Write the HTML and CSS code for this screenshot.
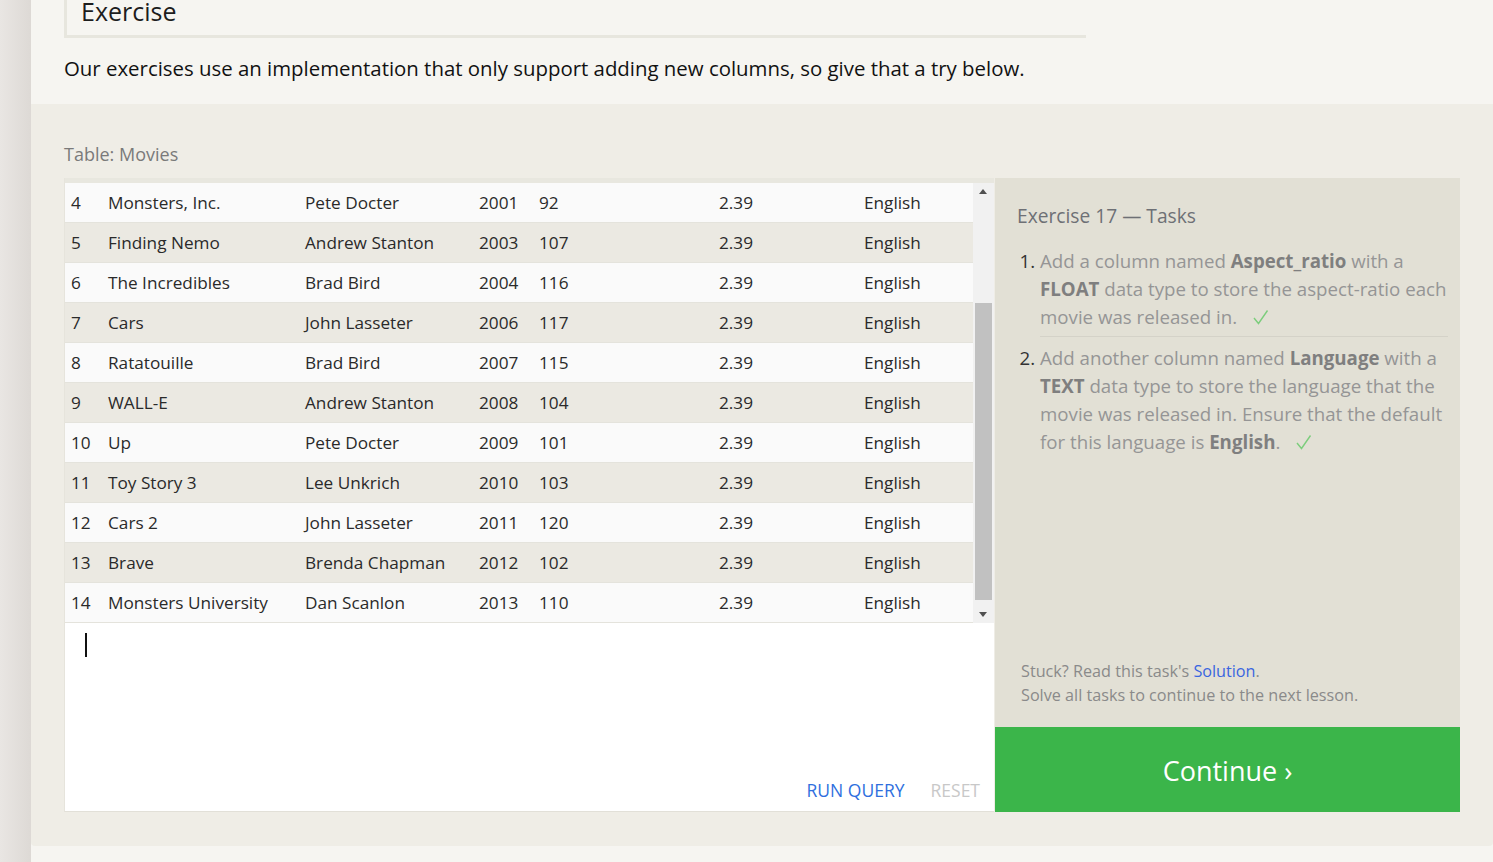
FILE: index.html
```html
<!DOCTYPE html>
<html>
<head>
<meta charset="utf-8">
<link rel="stylesheet" href="styles.css">
</head>
<body>
<div class="strip"></div>
<div class="page">
  <div class="intro">
    <div class="heading">Exercise</div>
    <p class="lead">Our exercises use an implementation that only support adding new columns, so give that a try below.</p>
  </div>
  <div class="exercise">
    <div class="table-label">Table: Movies</div>
    <div class="workspace">
      <div class="left">
        <div class="results">
          <div class="rows">
            <div class="row"><span class="c-id">4</span><span class="c-title">Monsters, Inc.</span><span class="c-dir">Pete Docter</span><span class="c-year">2001</span><span class="c-len">92</span><span class="c-ar">2.39</span><span class="c-lang">English</span></div>
            <div class="row alt"><span class="c-id">5</span><span class="c-title">Finding Nemo</span><span class="c-dir">Andrew Stanton</span><span class="c-year">2003</span><span class="c-len">107</span><span class="c-ar">2.39</span><span class="c-lang">English</span></div>
            <div class="row"><span class="c-id">6</span><span class="c-title">The Incredibles</span><span class="c-dir">Brad Bird</span><span class="c-year">2004</span><span class="c-len">116</span><span class="c-ar">2.39</span><span class="c-lang">English</span></div>
            <div class="row alt"><span class="c-id">7</span><span class="c-title">Cars</span><span class="c-dir">John Lasseter</span><span class="c-year">2006</span><span class="c-len">117</span><span class="c-ar">2.39</span><span class="c-lang">English</span></div>
            <div class="row"><span class="c-id">8</span><span class="c-title">Ratatouille</span><span class="c-dir">Brad Bird</span><span class="c-year">2007</span><span class="c-len">115</span><span class="c-ar">2.39</span><span class="c-lang">English</span></div>
            <div class="row alt"><span class="c-id">9</span><span class="c-title">WALL-E</span><span class="c-dir">Andrew Stanton</span><span class="c-year">2008</span><span class="c-len">104</span><span class="c-ar">2.39</span><span class="c-lang">English</span></div>
            <div class="row"><span class="c-id">10</span><span class="c-title">Up</span><span class="c-dir">Pete Docter</span><span class="c-year">2009</span><span class="c-len">101</span><span class="c-ar">2.39</span><span class="c-lang">English</span></div>
            <div class="row alt"><span class="c-id">11</span><span class="c-title">Toy Story 3</span><span class="c-dir">Lee Unkrich</span><span class="c-year">2010</span><span class="c-len">103</span><span class="c-ar">2.39</span><span class="c-lang">English</span></div>
            <div class="row"><span class="c-id">12</span><span class="c-title">Cars 2</span><span class="c-dir">John Lasseter</span><span class="c-year">2011</span><span class="c-len">120</span><span class="c-ar">2.39</span><span class="c-lang">English</span></div>
            <div class="row alt"><span class="c-id">13</span><span class="c-title">Brave</span><span class="c-dir">Brenda Chapman</span><span class="c-year">2012</span><span class="c-len">102</span><span class="c-ar">2.39</span><span class="c-lang">English</span></div>
            <div class="row"><span class="c-id">14</span><span class="c-title">Monsters University</span><span class="c-dir">Dan Scanlon</span><span class="c-year">2013</span><span class="c-len">110</span><span class="c-ar">2.39</span><span class="c-lang">English</span></div>
          </div>
          <div class="scrollbar">
            <div class="arrow up"></div>
            <div class="track"><div class="thumb"></div></div>
            <div class="arrow down"></div>
          </div>
        </div>
        <div class="editor">
          <div class="caret"></div>
          <div class="actions">
            <span class="run">RUN QUERY</span>
            <span class="reset">RESET</span>
          </div>
        </div>
      </div>
      <div class="right">
        <div class="tasks">
          <div class="tasks-title">Exercise 17 — Tasks</div>
          <ol class="task-list">
            <li><span class="task-text">Add a column named <b>Aspect_ratio</b> with a <b>FLOAT</b> data type to store the aspect-ratio each movie was released in.</span><svg class="check" width="16" height="16" viewBox="0 0 16 16"><polyline points="1,9 5.5,14.5 14.5,1.5" fill="none" stroke="#7ccd7c" stroke-width="1.4"/></svg></li>
            <li><span class="task-text">Add another column named <b>Language</b> with a <b>TEXT</b> data type to store the language that the movie was released in. Ensure that the default for this language is <b>English</b>.</span><svg class="check" width="16" height="16" viewBox="0 0 16 16"><polyline points="1,9 5.5,14.5 14.5,1.5" fill="none" stroke="#7ccd7c" stroke-width="1.4"/></svg></li>
          </ol>
          <div class="help">
            <div>Stuck? Read this task's <span class="link">Solution</span>.</div>
            <div>Solve all tasks to continue to the next lesson.</div>
          </div>
        </div>
        <div class="continue">Continue ›</div>
      </div>
    </div>
  </div>
</div>
</body>
</html>
```

FILE: styles.css
```css
html, body {
  margin: 0;
  padding: 0;
}
body {
  display: flex;
  height: 862px;
  overflow: hidden;
  background: #f6f5f1;
  font-family: "Open Sans", "Noto Sans", sans-serif;
  color: #222;
}
.strip {
  width: 31px;
  flex: none;
  background: linear-gradient(to right, #e9e6e3, #ddd9d5);
}
.page {
  flex: 1;
  display: flex;
  flex-direction: column;
  min-width: 0;
}
.intro {
  padding: 0 0 0 33px;
  height: 104px;
}
.heading {
  width: 1005px;
  margin-top: -9px;
  padding: 0 0 4px 14px;
  border-left: 3px solid #e7e6de;
  border-bottom: 3px solid #e7e6de;
  font-size: 25px;
  line-height: 40px;
  color: #1d1d1d;
}
.lead {
  margin: 15px 0 0 0;
  font-size: 20.4px;
  line-height: 30px;
  color: #111;
}
.exercise {
  background: #efede6;
  border-radius: 0 0 4px 4px;
  padding: 36px 33px 34px 33px;
  height: 742px;
  box-sizing: border-box;
}
.table-label {
  font-size: 18px;
  line-height: 28px;
  color: #7a7a7a;
  margin-bottom: 10px;
}
.workspace {
  display: flex;
  height: 634px;
}
.left {
  width: 930px;
  display: flex;
  flex-direction: column;
  border-bottom: 1px solid #e2e0d8;
  border-left: 1px solid #e6e4dc;
  box-sizing: border-box;
}
.results {
  display: flex;
  border-top: 5px solid #e8e7df;
  background: #f1f1f1;
}
.rows {
  width: 908px;
}
.row {
  display: flex;
  height: 39px;
  align-items: center;
  background: #fafafa;
  border-bottom: 1px solid #e4e3dc;
  font-size: 17.2px;
  color: #2a2a2a;
}
.row.alt {
  background: #ebe9e2;
}
.row span { white-space: nowrap; }
.c-id { width: 37px; padding-left: 6px; }
.c-title { width: 197px; }
.c-dir { width: 174px; }
.c-year { width: 60px; }
.c-len { width: 180px; }
.c-ar { width: 145px; }
.c-lang { width: 100px; }
.scrollbar {
  width: 21px;
  display: flex;
  flex-direction: column;
  align-items: center;
  background: #f1f1f1;
}
.arrow {
  height: 17px;
  width: 21px;
  position: relative;
}
.arrow::after {
  content: "";
  position: absolute;
  left: 6px;
  top: 6px;
  border-left: 4px solid transparent;
  border-right: 4px solid transparent;
}
.arrow.up::after { border-bottom: 5px solid #505050; }
.arrow.down::after { border-top: 5px solid #505050; }
.track {
  flex: 1;
  width: 17px;
  padding-top: 103px;
  padding-bottom: 6px;
  display: flex;
}
.thumb {
  flex: 1;
  background: #c1c1c1;
}
.editor {
  flex: 1;
  background: #fff;
  display: flex;
  flex-direction: column;
  justify-content: space-between;
  padding: 10px 14px 9px 20px;
}
.caret {
  width: 2px;
  height: 24px;
  background: #111;
}
.actions {
  display: flex;
  justify-content: flex-end;
  gap: 26px;
  font-size: 17.5px;
  line-height: 24px;
}
.run { color: #2f6fde; }
.reset { color: #c8c8c8; }
.right {
  width: 465px;
  margin-left: 1px;
  display: flex;
  flex-direction: column;
}
.tasks {
  flex: 1;
  background: #e2e0d5;
  padding: 24px 12px 20px 22px;
  display: flex;
  flex-direction: column;
}
.tasks-title {
  font-size: 19.2px;
  line-height: 28px;
  color: #6e7075;
}
.task-list {
  margin: 17px 0 0 0;
  padding: 0 0 0 23px;
  font-size: 18.7px;
  line-height: 28px;
  color: #909090;
}
.task-list li {
  color: #333;
}
.task-list li + li {
  border-top: 1px solid #d4d2c8;
  margin-top: 5px;
  padding-top: 7px;
}
.task-text { color: #959595; }
.task-text b { color: #7f7f7f; }
.check {
  margin-left: 16px;
  vertical-align: -1px;
}
.help {
  margin-top: auto;
  padding-left: 4px;
  font-size: 16.2px;
  line-height: 24px;
  color: #8a8a8a;
}
.link { color: #3a66e0; }
.continue {
  height: 85px;
  background: #3bb54a;
  color: #fff;
  font-size: 27px;
  display: flex;
  align-items: center;
  justify-content: center;
  padding-top: 2px;
  box-sizing: border-box;
}
```
